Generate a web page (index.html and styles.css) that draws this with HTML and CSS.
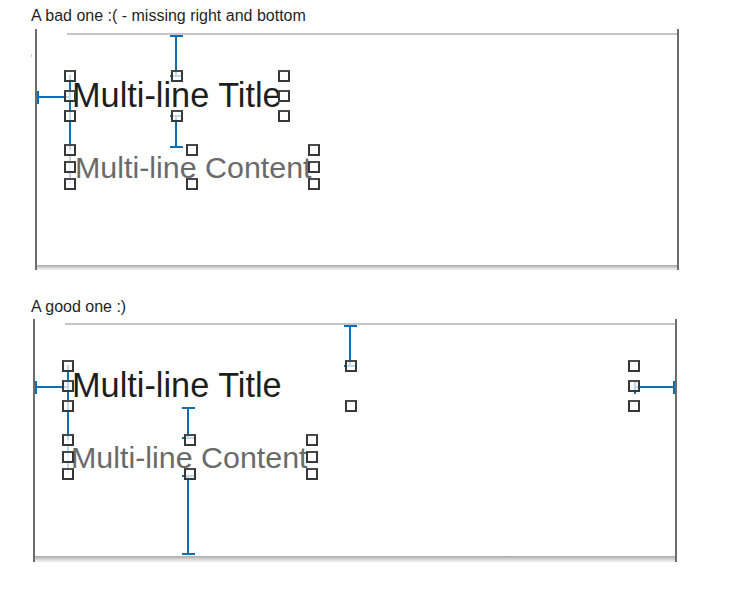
FILE: index.html
```html
<!DOCTYPE html>
<html lang="en">
<head>
<meta charset="utf-8">
<title>Multi-line constraints</title>
<link rel="stylesheet" href="styles.css">
</head>
<body>
  <section class="case case-bad">
    <p class="caption">A bad one :( - missing right and bottom</p>
    <div class="canvas">
      <div class="rule-top"></div>
      <div class="rule-bottom"></div>
      <span class="speck"></span>

      <div class="node title">
        <span class="text">Multi-line Title</span>
      </div>
      <div class="node content">
        <span class="text">Multi-line Content</span>
      </div>

      <div class="align"></div>
      <div class="ib-v c-top"></div>
      <div class="ib-h c-left"></div>
      <div class="ib-v c-mid"></div>

      <div class="handles title">
        <i class="h l t"></i><i class="h l m"></i><i class="h l b"></i>
        <i class="h c t"></i><i class="h c b"></i>
        <i class="h r t"></i><i class="h r m"></i><i class="h r b"></i>
      </div>
      <div class="handles content">
        <i class="h l t"></i><i class="h l m"></i><i class="h l b"></i>
        <i class="h c t"></i><i class="h c b"></i>
        <i class="h r t"></i><i class="h r m"></i><i class="h r b"></i>
      </div>
    </div>
  </section>

  <section class="case case-good">
    <p class="caption">A good one :)</p>
    <div class="canvas">
      <div class="rule-top"></div>
      <div class="rule-bottom"></div>

      <div class="node title">
        <span class="text">Multi-line Title</span>
      </div>
      <div class="node content">
        <span class="text">Multi-line Content</span>
      </div>

      <div class="align"></div>
      <div class="ib-v c-top"></div>
      <div class="ib-h c-left"></div>
      <div class="ib-h c-right"></div>
      <div class="ib-v c-mid"></div>
      <div class="ib-v c-bottom"></div>

      <div class="handles title">
        <i class="h l t"></i><i class="h l m"></i><i class="h l b"></i>
        <i class="h c t"></i><i class="h c b"></i>
        <i class="h r t"></i><i class="h r m"></i><i class="h r b"></i>
      </div>
      <div class="handles content">
        <i class="h l t"></i><i class="h l m"></i><i class="h l b"></i>
        <i class="h c t"></i><i class="h c b"></i>
        <i class="h r t"></i><i class="h r m"></i><i class="h r b"></i>
      </div>
    </div>
  </section>
</body>
</html>
```

FILE: styles.css
```css
* { box-sizing: border-box; }

html, body {
  margin: 0;
  background: #ffffff;
}

body {
  padding-top: 7px;
  font-family: "Liberation Sans", Arial, sans-serif;
  width: 740px;
  height: 597px;
  overflow: hidden;
}

.case {
  padding-left: 31px;
}

.case-good {
  margin-top: 28px;
}

.caption {
  margin: 0;
  font-size: 16px;
  line-height: 18px;
  color: #1f1f1f;
  white-space: nowrap;
}

.canvas {
  position: relative;
  width: 644px;
  display: flex;
  flex-direction: column;
  border-left: 2px solid #6c6c6c;
  border-right: 2px solid #6c6c6c;
}

.case-bad .canvas {
  margin: 4px 0 0 4px;
  height: 241px;
}

.case-good .canvas {
  margin: 3px 0 0 2px;
  height: 243px;
}

.rule-top {
  margin: 4px 0 0 30px;
  height: 2px;
  background: #c6c5cb;
}

.rule-bottom {
  margin-top: auto;
  height: 5px;
  background: linear-gradient(to bottom, #a9a9a9 0, #c4c4c4 35%, #e3e3e3 70%, #efefef 100%);
}

.case-good .rule-bottom {
  height: 6px;
}

.speck {
  position: absolute;
  left: -6px;
  top: 25px;
  width: 1px;
  height: 3px;
  background: #c9c9c9;
}

/* label frames (coordinates relative to the canvas content box) */
.node,
.handles {
  position: absolute;
  white-space: nowrap;
}

.title {
  left: 33px;
  top: 47px;
  width: 214px;
  height: 40px;
}

.content {
  left: 33px;
  top: 121px;
  width: 244px;
  height: 34px;
}

.case-good .title {
  width: 566px;
}

.node.title .text {
  display: block;
  padding-left: 2px;
  font-size: 34.3px;
  line-height: 38px;
  color: #1e1e1e;
}

.node.content .text {
  display: block;
  padding-left: 5px;
  font-size: 30.4px;
  line-height: 34px;
  color: #6a6a6a;
}

.case-good .node.title .text { padding-left: 4px; }
.case-good .node.content .text { padding-left: 3px; }

/* resize handles */
.h {
  position: absolute;
  width: 12px;
  height: 12px;
  margin: -6px 0 0 -6px;
  border: 2px solid #383838;
  border-top-color: #4a4a4a;
  background: rgba(255, 255, 255, 0.74);
}

.h.l { left: 0; }
.h.c { left: 50%; }
.h.r { left: 100%; }
.h.t { top: 0; }
.h.m { top: 50%; }
.h.b { top: 100%; }

/* constraints */
.align {
  position: absolute;
  left: 32px;
  top: 46px;
  width: 2px;
  height: 109px;
  background: linear-gradient(to bottom, #0c6fb1 0, #0c6fb1 75px, #b9d3e8 75px, #b9d3e8 100%);
}

.ib-v {
  position: absolute;
  width: 13px;
  border-top: 2px solid #0c6fb1;
  border-bottom: 2px solid #0c6fb1;
  background: linear-gradient(#0c6fb1, #0c6fb1) no-repeat 5px 0 / 2px 100%;
}

.ib-h {
  position: absolute;
  height: 13px;
  border-left: 2px solid #0c6fb1;
  border-right: 2px solid #0c6fb1;
  background: linear-gradient(#0c6fb1, #0c6fb1) no-repeat 0 5px / 100% 2px;
}

.case-bad .c-top { left: 133px; top: 6px; height: 42px; }
.case-bad .c-left { left: 0; top: 62px; width: 34px; }
.case-bad .c-mid { left: 133px; top: 86px; height: 33px; }

.case-good .c-top { left: 309px; top: 6px; height: 42px; }
.case-good .c-left { left: 0; top: 62px; width: 34px; }
.case-good .c-right { left: 599px; top: 62px; width: 41px; }
.case-good .c-mid { left: 147px; top: 88px; height: 32px; }
.case-good .c-bottom { left: 147px; top: 156px; height: 80px; }
```
